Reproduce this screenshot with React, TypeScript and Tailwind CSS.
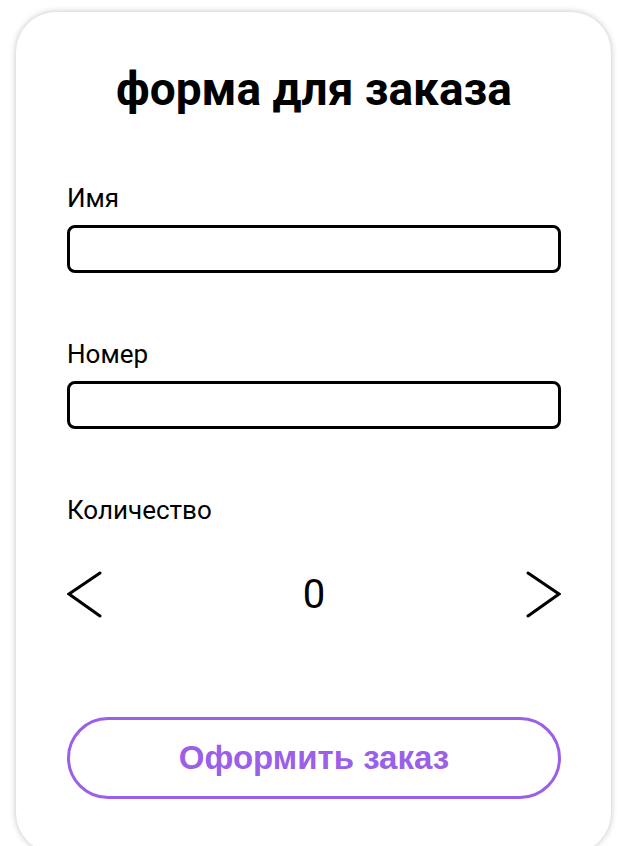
import { useState } from 'react'

function Chevron({ dir }: { dir: 'left' | 'right' }) {
  const points = dir === 'left' ? '33,2 2,23 33,45' : '2,2 33,23 2,45'
  return (
    <svg width="35" height="47" viewBox="0 0 35 47" fill="none">
      <polyline points={points} stroke="#000" strokeWidth="3" strokeLinecap="round" strokeLinejoin="miter" />
    </svg>
  )
}

function Field({ label, value, onChange }: { label: string; value: string; onChange: (v: string) => void }) {
  return (
    <div className="flex flex-col">
      <label className="text-[26px] leading-[30px] text-black">{label}</label>
      <input
        value={value}
        onChange={(e) => onChange(e.target.value)}
        className="mt-[12px] h-[48px] w-full rounded-[8px] border-[3px] border-black bg-white px-3 text-[20px] outline-none"
      />
    </div>
  )
}

export default function App() {
  const [name, setName] = useState('')
  const [phone, setPhone] = useState('')
  const [count, setCount] = useState(0)

  return (
    <div className="h-[846px] overflow-hidden bg-white pt-[12px] font-['Roboto',sans-serif]">
      <div className="ml-[16px] h-[841px] w-[595px] rounded-[40px] bg-white pl-[51px] pr-[50px] pt-[50px] shadow-[0_0_6px_rgba(0,0,0,0.25)]">
        <h1 className="text-center text-[46px] font-bold leading-[54px] text-black">форма для заказа</h1>

        <div className="mt-[67px]">
          <Field label="Имя" value={name} onChange={setName} />
        </div>
        <div className="mt-[66px]">
          <Field label="Номер" value={phone} onChange={setPhone} />
        </div>

        <div className="mt-[66px] text-[26px] leading-[30px] text-black">Количество</div>

        <div className="mt-[46px] flex items-center justify-between">
          <button type="button" onClick={() => setCount((c) => Math.max(0, c - 1))}>
            <Chevron dir="left" />
          </button>
          <span className="text-[40px] leading-[47px] text-black">{count}</span>
          <button type="button" onClick={() => setCount((c) => c + 1)}>
            <Chevron dir="right" />
          </button>
        </div>

        <button
          type="button"
          className="mt-[99px] h-[82px] w-full rounded-full border-[3px] border-[#9b5fe8] font-['Liberation_Sans',Arial,sans-serif] text-[33px] font-bold text-[#9b5fe8]"
        >
          Оформить заказ
        </button>
      </div>
    </div>
  )
}
